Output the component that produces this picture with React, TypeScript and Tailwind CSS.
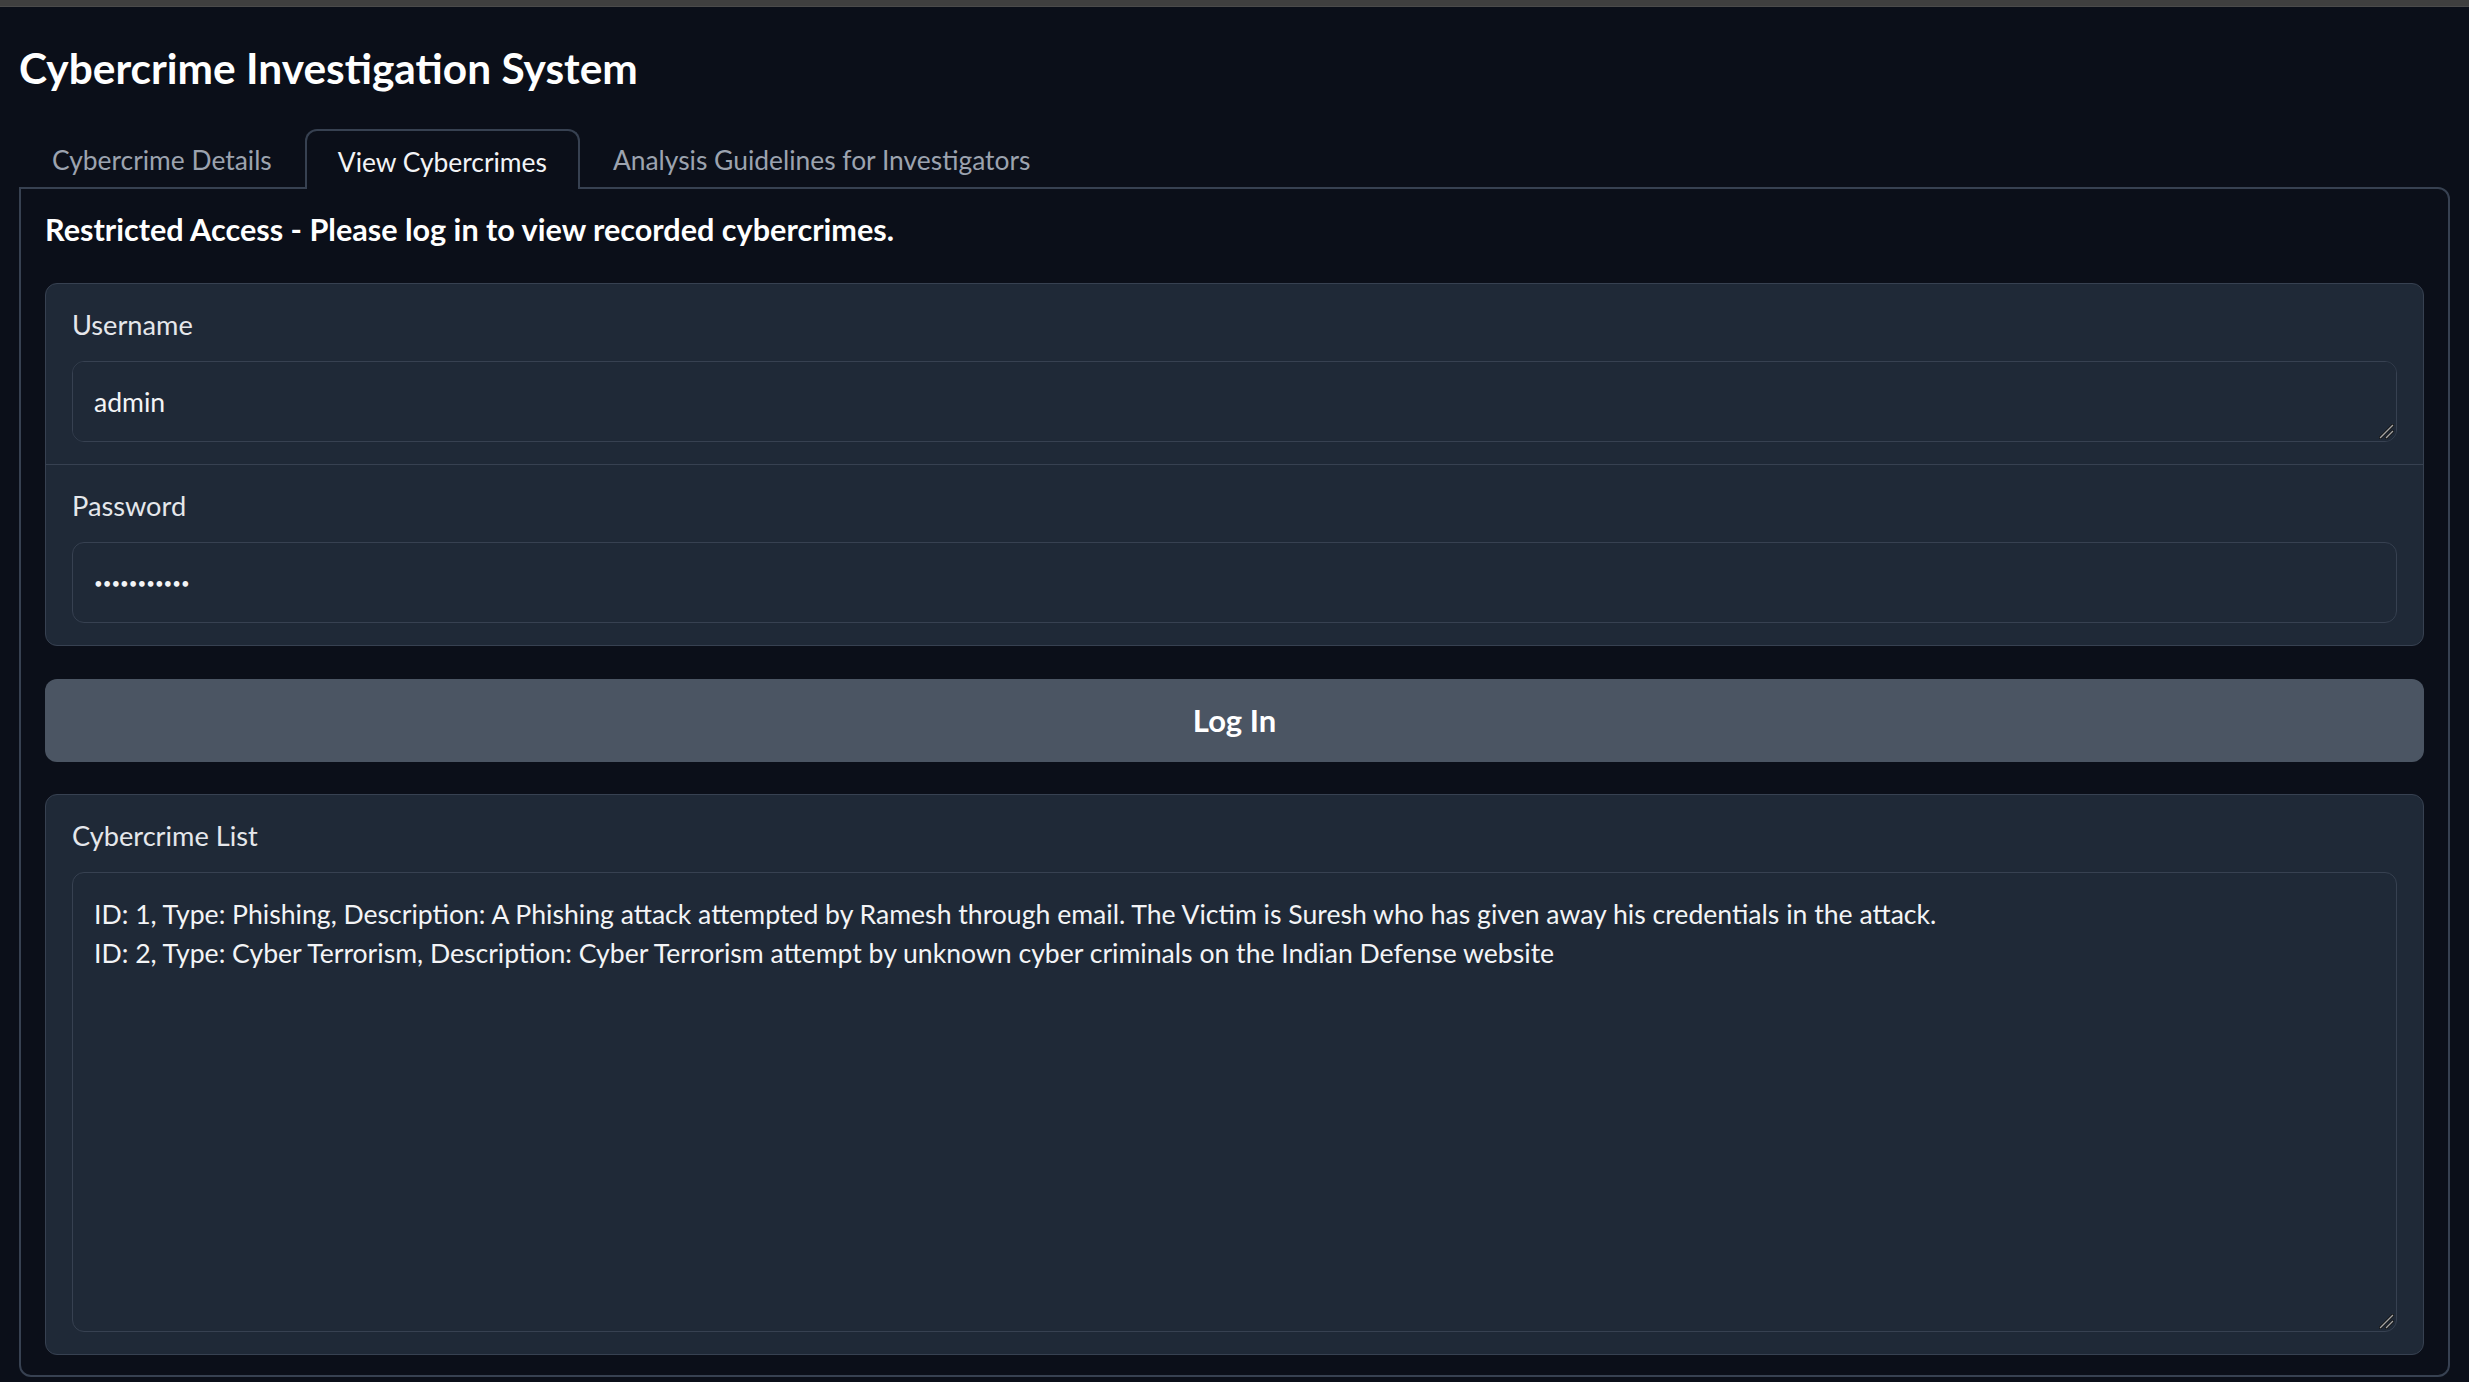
import React from "react";

const font = { fontFamily: "Lato, 'Noto Sans', sans-serif" };

function Tab({ label, active }: { label: string; active?: boolean }) {
  return (
    <div
      className={
        active
          ? "relative z-10 -mb-[2px] flex h-[60px] items-center rounded-t-[12px] border-2 border-b-0 border-[#374151] bg-[#0b0f19] px-[31px] pt-[6px] text-[26.4px] text-[#f3f4f6]"
          : "flex h-[60px] items-center border-2 border-b-0 border-transparent px-[31px] pt-[6px] text-[26.4px] text-[#9ca3af]"
      }
    >
      {label}
    </div>
  );
}

function Grip() {
  return (
    <svg
      className="pointer-events-none absolute bottom-[3px] right-[3px]"
      width="15"
      height="15"
      viewBox="0 0 15 15"
    >
      <g strokeLinecap="square">
        <line x1="1.5" y1="13.5" x2="13.5" y2="1.5" stroke="#111111" strokeWidth="3" />
        <line x1="7.5" y1="13.5" x2="13.5" y2="7.5" stroke="#111111" strokeWidth="3" />
        <line x1="1.5" y1="13.5" x2="13.5" y2="1.5" stroke="#a3a3a3" strokeWidth="1.3" />
        <line x1="7.5" y1="13.5" x2="13.5" y2="7.5" stroke="#a3a3a3" strokeWidth="1.3" />
      </g>
    </svg>
  );
}

export default function App() {
  const list =
    "ID: 1, Type: Phishing, Description: A Phishing attack attempted by Ramesh through email. The Victim is Suresh who has given away his credentials in the attack.\nID: 2, Type: Cyber Terrorism, Description: Cyber Terrorism attempt by unknown cyber criminals on the Indian Defense website";
  return (
    <div className="min-h-screen bg-[#0b0f19] text-[#f3f4f6]" style={font}>
      <div className="h-[7px] border-b border-[#4b4b4b] bg-[#3f3f3f]" />
      <div className="px-[19px] pb-[4px]">
        <h1 className="mt-[37px] text-[42.4px] font-bold leading-[48px] text-white">
          Cybercrime Investigation System
        </h1>
        <div className="mt-[35px] flex items-end">
          <Tab label="Cybercrime Details" />
          <Tab label="View Cybercrimes" active />
          <Tab label="Analysis Guidelines for Investigators" />
        </div>
        <div className="rounded-b-[12px] rounded-tr-[12px] border-2 border-[#374151] px-[24px] pb-[20px] pt-[21px]">
          <div className="text-[30.6px] font-bold leading-[40px] text-white">
            Restricted Access - Please log in to view recorded cybercrimes.
          </div>
          <div className="mt-[33px] overflow-hidden rounded-[12px] border border-[#374151] bg-[#1f2937]">
            <div className="px-[26px] pb-[22px] pt-[23px]">
              <div className="mb-[18px] text-[27.2px] leading-[36px] text-[#e5e7eb]">Username</div>
              <div className="relative">
                <textarea
                  readOnly
                  rows={1}
                  value="admin"
                  className="block h-[81px] w-full resize-none rounded-[12px] border border-[#374151] bg-[#1f2937] px-[21px] py-[20px] text-[26.6px] leading-[40px] text-[#f3f4f6] outline-none"
                  style={font}
                />
                <Grip />
              </div>
            </div>
            <div className="h-px bg-[#374151]" />
            <div className="px-[26px] pb-[22px] pt-[23px]">
              <div className="mb-[18px] text-[27.2px] leading-[36px] text-[#e5e7eb]">Password</div>
              <input
                readOnly
                type="password"
                value="admin123456"
                className="block h-[81px] w-full rounded-[12px] border border-[#374151] bg-[#1f2937] px-[21px] text-[15px] text-[#f3f4f6] outline-none"
                style={font}
              />
            </div>
          </div>
          <button className="mt-[33px] flex h-[83px] w-full items-center justify-center rounded-[12px] bg-[#4b5563] text-[31px] font-bold text-white">
            Log In
          </button>
          <div className="mt-[32px] rounded-[12px] border border-[#374151] bg-[#1f2937] px-[26px] pb-[22px] pt-[23px]">
            <div className="mb-[18px] text-[27.2px] leading-[36px] text-[#e5e7eb]">Cybercrime List</div>
            <div className="relative">
              <textarea
                readOnly
                value={list}
                className="block h-[460px] w-full resize-none rounded-[12px] border border-[#374151] bg-[#1f2937] px-[21px] pb-[19px] pt-[22px] text-[26.6px] leading-[39px] text-[#f3f4f6] outline-none"
                style={font}
              />
              <Grip />
            </div>
          </div>
        </div>
      </div>
    </div>
  );
}
